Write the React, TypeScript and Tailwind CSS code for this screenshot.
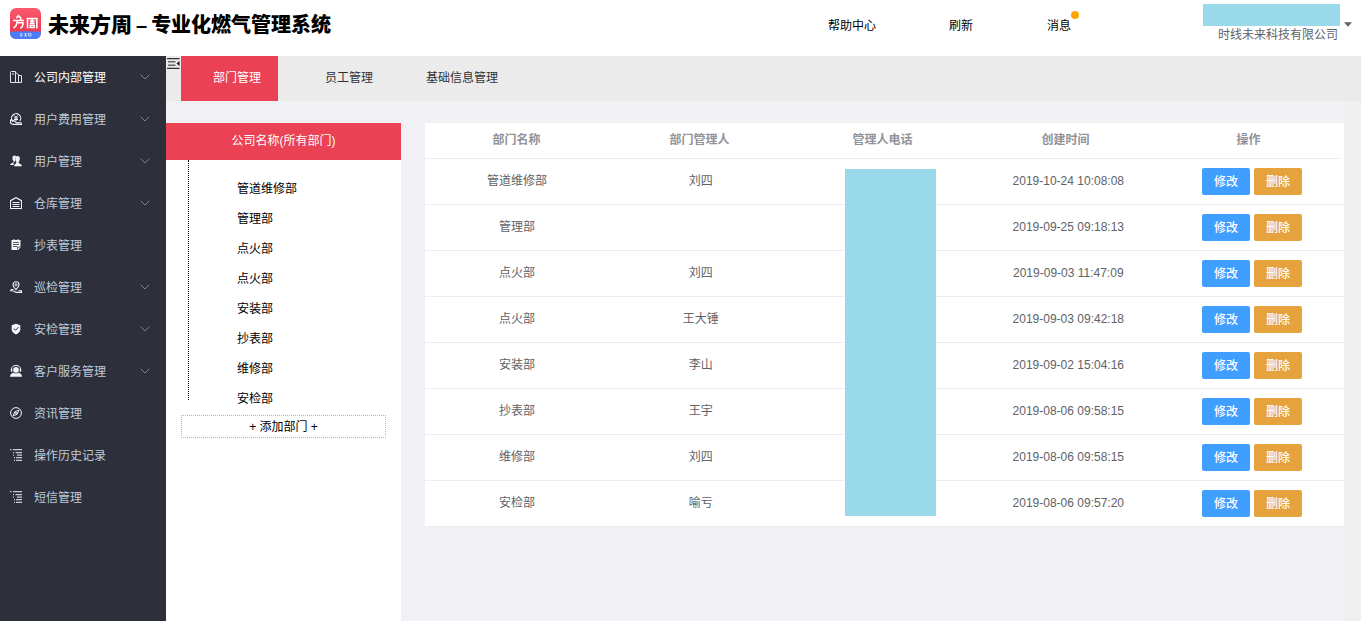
import React from "react";

type IconName =
  | "building"
  | "fee"
  | "users"
  | "warehouse"
  | "meter"
  | "patrol"
  | "shield"
  | "service"
  | "compass"
  | "list";

type MenuItem = { label: string; icon: IconName; expandable: boolean; active?: boolean };

const menu: MenuItem[] = [
  { label: "公司内部管理", icon: "building", expandable: true, active: true },
  { label: "用户费用管理", icon: "fee", expandable: true },
  { label: "用户管理", icon: "users", expandable: true },
  { label: "仓库管理", icon: "warehouse", expandable: true },
  { label: "抄表管理", icon: "meter", expandable: false },
  { label: "巡检管理", icon: "patrol", expandable: true },
  { label: "安检管理", icon: "shield", expandable: true },
  { label: "客户服务管理", icon: "service", expandable: true },
  { label: "资讯管理", icon: "compass", expandable: false },
  { label: "操作历史记录", icon: "list", expandable: false },
  { label: "短信管理", icon: "list", expandable: false },
];

const departments = ["管道维修部", "管理部", "点火部", "点火部", "安装部", "抄表部", "维修部", "安检部"];

const rows = [
  { name: "管道维修部", manager: "刘四", created: "2019-10-24 10:08:08" },
  { name: "管理部", manager: "", created: "2019-09-25 09:18:13" },
  { name: "点火部", manager: "刘四", created: "2019-09-03 11:47:09" },
  { name: "点火部", manager: "王大锤", created: "2019-09-03 09:42:18" },
  { name: "安装部", manager: "李山", created: "2019-09-02 15:04:16" },
  { name: "抄表部", manager: "王宇", created: "2019-08-06 09:58:15" },
  { name: "维修部", manager: "刘四", created: "2019-08-06 09:58:15" },
  { name: "安检部", manager: "喻亏", created: "2019-08-06 09:57:20" },
];

const columns = ["部门名称", "部门管理人", "管理人电话", "创建时间", "操作"];

function iconShape(name: IconName) {
  switch (name) {
    case "building":
      return (
        <g fill="none" stroke="currentColor">
          <path d="M.5 11.500V1.500Q.5.500 1.500.500H5.500V11.500ZM5.500 1.500 8.500 3.500V11.500M8.500 4.500H11.500V11.500H5.500" strokeWidth="0.9" />
          <path d="M2 3h2" strokeWidth="1" />
        </g>
      );
    case "fee":
      return (
        <g fill="none" stroke="currentColor" strokeWidth="1.100">
          <path d="M3.200 8.800A4.600 4.600 0 1 1 9.800 8" />
          <path d="M4.200 2.400 6 4.400l1.800-2M4 4.900h4M4 6.500h4M6 4.600V8.200" strokeWidth="1" />
          <path d="M.6 6.400v3.800l2.400 1.200h8.500c0-1.500-1-2-2.200-1.800L6.600 10C6 8.900 3 7 1.200 6.700" />
        </g>
      );
    case "users":
      return (
        <g fill="currentColor">
          <path d="M4.700.6C3 .6 2.300 1.800 2.500 3.400c0 1 .5 1.900 1.100 2.500v1C2.800 7.900.3 8 .1 10h3.500V7.500L5.300 5.900C4.500 4.100 4.900 2.200 6.200 1.200 5.800.8 5.300.6 4.700.6Z" />
          <path d="M7.500 1.100c-1.700 0-2.500 1.300-2.300 3 0 1.200.5 2.100 1.100 2.700v1.100C5.500 8.900 4.300 9 4 11.300h8c-.2-2.200-1.900-2.400-3.300-3.400V6.800c.6-.6 1.100-1.500 1.100-2.700.2-1.700-.6-3-2.300-3Z" />
        </g>
      );
    case "warehouse":
      return (
        <g fill="none" stroke="currentColor">
          <path d="M.5 11.500V3.700L6 .7l5.500 3v7.800Z" strokeWidth="1.100" />
          <path d="M2.500 5.500h7M2.500 7.500h7M2.500 9.500h7" strokeWidth="1" />
        </g>
      );
    case "meter":
      return (
        <g>
          <path fill="currentColor" d="M1.500 1h2V0h1v1h3V0h1v1h2v7.500L8 11H1.500Z" />
          <path d="M3 3.500h6M3 5.500h6M3 7.500h4M7.500 10.500V8h3" fill="none" stroke="#2d303b" strokeWidth="0.8" />
        </g>
      );
    case "patrol":
      return (
        <g fill="none" stroke="currentColor" strokeWidth="1.100">
          <path d="M6 8.600C4.300 6.900 3 5.600 3 3.700a3 3 0 0 1 6 0c0 1.900-1.300 3.200-3 4.900Z" />
          <circle cx="6" cy="3.800" r="1.100" strokeWidth="0.9" />
          <path d="M3.500 8.500H1.400L.5 9.800l3.500.2 2 1.400h5.500v-1.600H8.500" />
        </g>
      );
    case "shield":
      return (
        <g>
          <path fill="currentColor" d="M6 .8 10.300 2.300v4.200c0 2.200-1.900 3.700-4.300 4.900C3.600 10.200 1.700 8.700 1.700 6.500V2.300Z" />
          <path d="m3.800 5.500 1.700 1.800 2.900-3.100" fill="none" stroke="#2d303b" strokeWidth="1" />
        </g>
      );
    case "service":
      return (
        <g>
          <circle cx="6" cy="4.800" r="2.900" fill="currentColor" />
          <path d="M1.500 5.200V4.200a4.500 3.700 0 0 1 9 0v1" fill="none" stroke="currentColor" strokeWidth="1" />
          <path fill="currentColor" d="M.8 3.900h1.500v2.800H.8ZM9.700 3.900h1.500v2.800H9.700ZM0 11.800c0-2.400 1.600-3.600 3.600-4 1.400.9 3.400.9 4.800 0 2 .4 3.600 1.600 3.600 4Z" />
        </g>
      );
    case "compass":
      return (
        <g>
          <circle cx="6" cy="6" r="5.400" fill="none" stroke="currentColor" strokeWidth="1" />
          <path d="M8.900 3.100 7.200 7.200 3.100 8.900 4.800 4.800Z" fill="none" stroke="currentColor" strokeWidth="1" />
          <circle cx="6" cy="6" r="0.900" fill="currentColor" />
        </g>
      );
    case "list":
      return (
        <path
          fill="#c3cad8"
          d="M0 0h1.500v1.300H0ZM3 0h9v1.300H3ZM3 3h1v1.200H3ZM5.500 3H12v1.200H5.500ZM3 5.500h1v1.200H3ZM7 5.500h5v1.300H7ZM4 8h1v1.200H4ZM6 8h6v1.200H6ZM4 10.700h1V12H4ZM6 10.700h6V12H6Z"
        />
      );
  }
}

function MenuIcon({ name }: { name: IconName }) {
  return (
    <svg viewBox="0 0 12 12" className="size-3 shrink-0 text-[#f4f6fa]" aria-hidden="true">
      {iconShape(name)}
    </svg>
  );
}

function Logo() {
  return (
    <svg viewBox="0 0 31 31" className="size-[31px] shrink-0 rounded-md" aria-hidden="true">
      <defs>
        <linearGradient id="logo-red" x1="0" y1="0" x2="0" y2="1">
          <stop offset="0" stopColor="#fb5a6c" />
          <stop offset="1" stopColor="#e5304a" />
        </linearGradient>
      </defs>
      <rect width="31" height="31" fill="url(#logo-red)" />
      <path d="M0 23.800Q15.500 22.600 31 23.800V31H0Z" fill="#4a7dfb" />
      <path d="M10 26h2.500M11.200 25v3M10 28h2.500M14.300 26h2.500M14.300 28h2.500M15.500 25v3M18.500 25.500h2.500v2.500h-2.500Z" stroke="#dbe6ff" strokeWidth="0.800" fill="none" />
      <path
        d="M3 12.500h11M6.300 9.800 8.500 7.800 10.700 9.800V12M7.200 12.500c0 4-1 6-3.700 7.500M7.200 14.800h5.800c0 3-.3 5-2.800 5.200M17.500 20.500V10.500h9.300v10M19.800 13h4.800M22.200 11v4.500M19.800 15.300h4.800M20.300 17.300h3.800v2.200h-3.800Z"
        stroke="#fff"
        strokeWidth="1.600"
        fill="none"
      />
    </svg>
  );
}

function Header() {
  return (
    <header className="flex h-14 shrink-0 items-start justify-between bg-white pl-2.5 text-black">
      <div className="flex items-start gap-[7px] pt-2">
        <Logo />
        <h1 className="flex items-center gap-1 pt-px whitespace-nowrap text-[20px] leading-8 font-black">
          <span className="text-[21px]">未来方周</span>
          <span>–</span>
          <span>专业化燃气管理系统</span>
        </h1>
      </div>
      <div className="flex items-start">
        <nav className="flex pt-[17px] leading-[18px]">
          <a href="#help" className="mr-[73px]">帮助中心</a>
          <a href="#refresh" className="mr-[74px]">刷新</a>
          <a href="#messages" className="relative mr-[132px]">
            消息
            <span className="absolute -top-1.5 left-6 size-2 rounded-full bg-[#ffa500]" />
          </a>
        </nav>
        <button type="button" className="flex items-center pt-1 pr-[9px] text-[#606266]">
          <span className="flex flex-col items-end">
            <span className="h-[22px] w-[137px] bg-[#9ad9ea]" />
            <span className="pr-0.5 leading-[18px]">时线未来科技有限公司</span>
          </span>
          <svg viewBox="0 0 8 5" className="ml-1 h-[5px] w-2" aria-hidden="true">
            <path d="M0 .3h8L4 4.700Z" fill="#606266" />
          </svg>
        </button>
      </div>
    </header>
  );
}

function Sidebar() {
  return (
    <aside className="w-[166px] shrink-0 bg-[#2d303b]">
      <ul>
        {menu.map((item) => (
          <li key={item.label}>
            <a
              href="#menu"
              className={
                item.active
                  ? "flex h-[42px] items-center gap-3 pr-4 pl-2.5 text-white"
                  : "flex h-[42px] items-center gap-3 pr-4 pl-2.5 text-[#bfcbd9]"
              }
            >
              <MenuIcon name={item.icon} />
              <span className="flex-1 pt-0.5">{item.label}</span>
              {item.expandable && (
                <svg viewBox="0 0 10 6" className="h-1.5 w-2.5" aria-hidden="true">
                  <path d="m.7.7 4.300 4.300L9.300.7" fill="none" stroke="#858891" strokeWidth="0.900" />
                </svg>
              )}
            </a>
          </li>
        ))}
      </ul>
    </aside>
  );
}

function TabBar() {
  return (
    <div className="flex h-[45px] shrink-0 items-start bg-[#ebebeb] text-[#303133]">
      <button type="button" aria-label="收起菜单" className="w-[15px] pt-0.5 pl-px">
        <svg viewBox="0 0 13 11" className="h-[11px] w-[13px]" aria-hidden="true">
          <path d="M0 0h12.500v1.200H0ZM0 9.800h12.500V11H0Z" fill="#333" />
          <path d="M1 3h7.500v1.500H1ZM1 6.500h7.500V8H1Z" fill="#666" />
          <path d="M12.500 3v5L9.500 5.500Z" fill="#111" />
        </svg>
      </button>
      <nav className="flex h-full leading-[44px]">
        <a href="#departments" className="bg-[#eb4154] pr-[17px] pl-8 text-white">部门管理</a>
        <a href="#staff" className="pl-[47px]">员工管理</a>
        <a href="#basics" className="pl-[53px]">基础信息管理</a>
      </nav>
    </div>
  );
}

function DepartmentTree() {
  return (
    <section className="w-[235px] shrink-0 bg-white text-black">
      <h2 className="bg-[#eb4154] text-center leading-[37px] text-white">公司名称(所有部门)</h2>
      <ul className="relative ml-[22px] pt-3.5 pl-[49px] before:absolute before:top-0 before:bottom-3.5 before:left-0 before:border-l before:border-dotted before:border-black before:content-['']">
        {departments.map((name, i) => (
          <li key={i} className="leading-[30px]">{name}</li>
        ))}
      </ul>
      <div className="px-[15px] pt-px">
        <button type="button" className="h-[23px] w-full border border-dotted border-[#b5b5b5] pt-px leading-5">
          + 添加部门 +
        </button>
      </div>
    </section>
  );
}

function DepartmentTable() {
  return (
    <table className="block w-full bg-white text-center text-[#606266]">
      <thead className="mr-1 block border-b border-[#ebeef5] text-[#909399]">
        <tr className="grid grid-cols-5">
          {columns.map((name) => (
            <th key={name} className="leading-[35px] font-bold">{name}</th>
          ))}
        </tr>
      </thead>
      <tbody className="block">
        {rows.map((row, i) => (
          <tr key={i} className="grid h-[46px] grid-cols-5 border-b border-[#ebeef5] leading-[44px]">
            <td>{row.name}</td>
            <td>{row.manager}</td>
            <td className="relative">
              {i === 0 && <span className="absolute top-2.5 left-[52px] h-[347px] w-[91px] bg-[#9ad9ea]" />}
            </td>
            <td>{row.created}</td>
            <td className="flex items-center justify-center gap-1 leading-[26px] font-medium text-white">
              <button type="button" className="rounded-xs bg-[#409eff] px-3 pt-px">修改</button>
              <button type="button" className="rounded-xs bg-[#e6a23c] px-3 pt-px">删除</button>
            </td>
          </tr>
        ))}
      </tbody>
    </table>
  );
}

export default function App() {
  return (
    <div className="flex min-h-screen flex-col bg-[#f0f0f5] font-['Liberation_Sans','Noto_Sans_CJK_SC',sans-serif] text-xs">
      <Header />
      <div className="flex flex-1">
        <Sidebar />
        <div className="flex min-w-0 flex-1 flex-col">
          <TabBar />
          <div className="flex flex-1">
            <main className="flex min-w-0 flex-1 gap-6 pt-[22px]">
              <DepartmentTree />
              <section className="min-w-0 flex-1">
                <DepartmentTable />
              </section>
            </main>
            <div className="w-[17px] shrink-0 bg-[#f0f0f0]" />
          </div>
        </div>
      </div>
    </div>
  );
}
